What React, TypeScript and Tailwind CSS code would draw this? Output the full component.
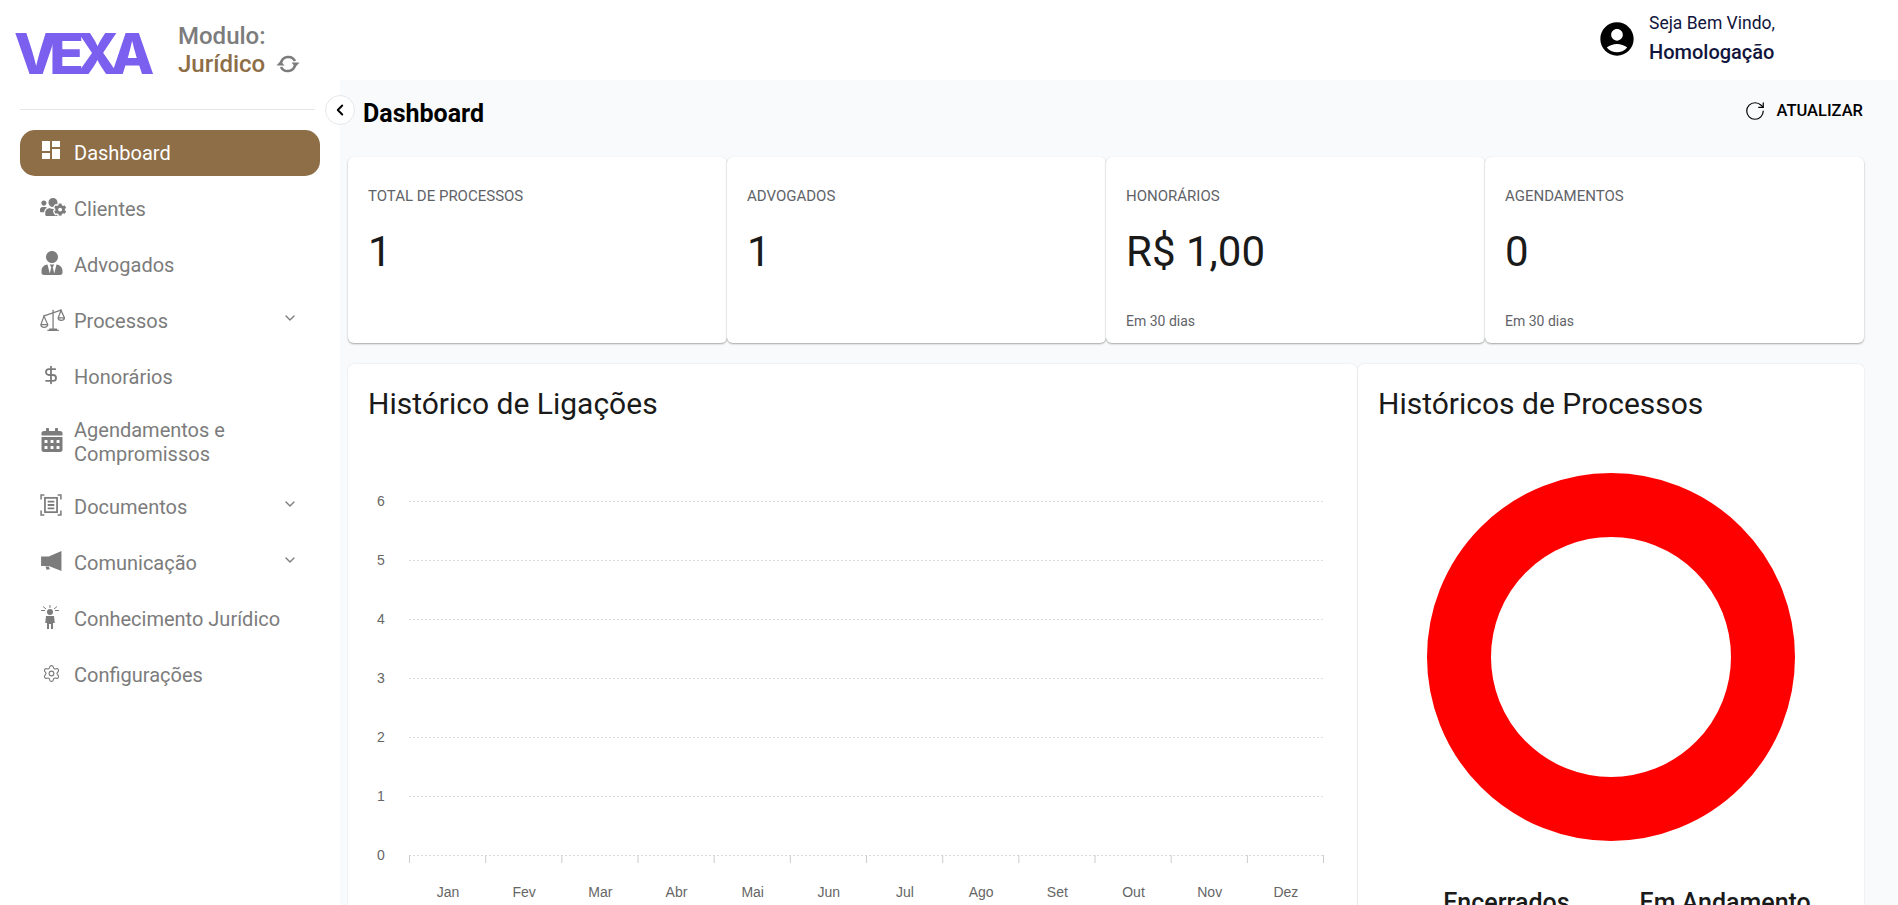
import { ReactNode } from "react";
import { ChevronDown, ChevronLeft, DollarSign, RotateCw, Settings } from "lucide-react";
import { FaCalendarAlt, FaUserTie, FaUsersCog } from "react-icons/fa";
import { MdAccountCircle, MdDashboard } from "react-icons/md";

const months = ["Jan", "Fev", "Mar", "Abr", "Mai", "Jun", "Jul", "Ago", "Set", "Out", "Nov", "Dez"];

function SyncIcon() {
  return (
    <svg viewBox="0 0 24 20" className="h-[20px] w-[24px]" fill="none" stroke="currentColor" strokeWidth="2.6">
      <path d="M5 9a7.5 7.5 0 0 1 14-2" />
      <path d="M19 11a7.5 7.5 0 0 1-14 2" />
      <path d="M15.5 8.5h8L19.5 13zM.5 11.5h8L4.5 7z" fill="currentColor" stroke="none" />
    </svg>
  );
}

function ScaleIcon() {
  return (
    <svg viewBox="0 0 22 22" className="h-[25px] w-[25px]" fill="none" stroke="currentColor" strokeWidth="1.1">
      <path d="M11.5 2.5v16.5M6.5 20.5h10M8 19.5h7" />
      <path d="M3 8 19 2.5" />
      <path d="M3.5 8 .8 15.5h6zM.8 15.5a3 2.4 0 0 0 6 0" />
      <path d="M18.5 3 16 9.5h5.5zM16 9.5a2.7 2.2 0 0 0 5.5 0" />
    </svg>
  );
}

function DocIcon() {
  return (
    <svg viewBox="0 0 20 20" className="h-[22px] w-[22px]" fill="none" stroke="currentColor" strokeWidth="1.4">
      <path d="M1 5V1h3M16 1h3v4M1 15v4h3M16 19h3v-4" />
      <rect x="4.5" y="3.5" width="11" height="13" strokeWidth="1.6" />
      <path d="M7 7h6M7 10h6M7 13h6" strokeWidth="1.6" />
    </svg>
  );
}

function HornIcon() {
  return (
    <svg viewBox="0 0 20 20" className="h-[22px] w-[22px]" fill="currentColor">
      <path d="M19.5 1v18L8 14.5H1V6h7z" />
      <path d="M5 15h3l1 2.5-3 .5z" />
    </svg>
  );
}

function KnowledgeIcon() {
  return (
    <svg viewBox="0 0 20 24" className="h-[24px] w-[20px]" fill="currentColor">
      <circle cx="10" cy="7" r="3" />
      <path d="M6 11h8l.8 7H13v6h-2v-5H9v5H7v-6H5.2z" />
      <path d="M10 0v3M3 1.5 6 4M17 1.5 14 4M1 5.5h4M15 5.5h4" stroke="currentColor" strokeWidth="1" />
    </svg>
  );
}

const menu: { label: ReactNode; icon: ReactNode; arrow?: boolean }[] = [
  { label: "Clientes", icon: <FaUsersCog size={26} /> },
  { label: "Advogados", icon: <FaUserTie size={24} /> },
  { label: "Processos", icon: <ScaleIcon />, arrow: true },
  { label: "Honorários", icon: <DollarSign size={20} strokeWidth={2.2} className="ml-[1px]" /> },
  {
    label: (
      <>
        Agendamentos e<br />
        Compromissos
      </>
    ),
    icon: <FaCalendarAlt size={24} />,
  },
  { label: "Documentos", icon: <DocIcon />, arrow: true },
  { label: "Comunicação", icon: <HornIcon />, arrow: true },
  { label: "Conhecimento Jurídico", icon: <KnowledgeIcon /> },
  { label: "Configurações", icon: <Settings size={19} strokeWidth={1.4} className="ml-[2px]" /> },
];

const stats = [
  { title: "Total de Processos", value: "1" },
  { title: "Advogados", value: "1" },
  { title: "Honorários", value: "R$ 1,00", note: "Em 30 dias" },
  { title: "Agendamentos", value: "0", note: "Em 30 dias" },
];

function LineChart() {
  return (
    <svg width="1009" height="480" viewBox="0 0 1009 480" className="block" fontFamily="'Liberation Sans', sans-serif" fontSize="14" fill="#666">
      {[0, 1, 2, 3, 4, 5, 6].map((n) => {
        const y = 426 - n * 59;
        return (
          <g key={n}>
            <line x1="61" x2="975" y1={y + 0.5} y2={y + 0.5} stroke="#dcdcdc" strokeDasharray="2 2" />
            <text x="33" y={y + 5} textAnchor="middle">
              {n}
            </text>
          </g>
        );
      })}
      {months.map((m, i) => (
        <text key={m} x={62 + 76.17 * i + 38} y={468} textAnchor="middle">
          {m}
        </text>
      ))}
      {[...months, ""].map((_, i) => (
        <line key={i} x1={61.5 + 76.17 * i} x2={61.5 + 76.17 * i} y1="426" y2="434" stroke="#ccc" />
      ))}
    </svg>
  );
}

export default function App() {
  return (
    <div className="flex h-screen overflow-hidden bg-white font-['Roboto',sans-serif]">
      {/* Sidebar */}
      <aside className="w-[340px] shrink-0 bg-white px-5">
        <div className="-ml-[6px] flex h-[109px] items-start">
          <div className="mt-[20px] w-[164px] font-['Inter',sans-serif] text-[57px] leading-[68px] font-extrabold tracking-[-8.5px] text-[#7b5fef]">
            VEXA
          </div>
          <div className="mt-[22px] text-[24px] leading-[28px] font-medium">
            <div className="text-[#7c7c7c]">Modulo:</div>
            <div className="flex items-center gap-[11px] text-[#8d6e47]">
              Jurídico
              <span className="text-[#7c7c7c]">
                <SyncIcon />
              </span>
            </div>
          </div>
        </div>
        <div className="mr-[5px] border-b border-[#e5e7eb]" />

        <nav className="mt-[20px] text-[20px] leading-6 text-[#7c7c7c]">
          <div className="flex h-[46px] w-[300px] items-center rounded-[15px] bg-[#8d6e47] pl-[21px] text-white">
            <span className="flex w-[33px] -translate-y-[3px]">
              <MdDashboard size={24} className="-ml-[2px]" />
            </span>
            Dashboard
          </div>
          <div className="mt-[5px] flex flex-col">
            {menu.map((item, i) => (
              <div key={i} className={`flex w-[300px] items-center pl-5 ${i === 4 ? "h-[74px]" : "h-[56px]"}`}>
                <span className="flex w-[34px] -translate-y-[2px] justify-start">{item.icon}</span>
                <span className="flex-1">{item.label}</span>
                {item.arrow && <ChevronDown size={16} strokeWidth={2} className="mr-[22px] -translate-y-[3px]" />}
              </div>
            ))}
          </div>
        </nav>
      </aside>

      {/* Main */}
      <div className="relative flex min-w-0 flex-1 flex-col">
        <header className="flex h-[80px] shrink-0 items-center justify-end bg-white pr-[121px]">
          <MdAccountCircle size={40} className="mr-[12px] -translate-y-[1px] text-black" />
          <div className="w-[128px] -translate-y-[3px] text-[#11153d]">
            <div className="text-[17.5px] leading-6">Seja Bem Vindo,</div>
            <div className="mt-[5px] text-[20px] leading-6 font-medium">Homologação</div>
          </div>
        </header>

        <button className="absolute left-[-15px] top-[95px] z-10 flex h-[30px] w-[30px] items-center justify-center rounded-full border border-[#e5e7eb] bg-white text-black">
          <ChevronLeft size={18} strokeWidth={2.5} />
        </button>

        <main className="flex-1 bg-[#f9fafb] pl-2 pr-[34px]">
          <div className="flex h-[77px] items-start justify-between pl-[15px]">
            <h1 className="mt-[18px] text-[25px] leading-8 font-bold text-black">Dashboard</h1>
            <button className="mt-[19px] mr-[1px] flex items-center gap-[10px] text-[16.5px] leading-6 font-medium text-black">
              <RotateCw size={22} strokeWidth={1.3} />
              ATUALIZAR
            </button>
          </div>

          <div className="grid grid-cols-4">
            {stats.map((s) => (
              <div key={s.title} className="relative h-[186px] rounded-[6px] bg-white px-5 pt-[29px] shadow-[0_1px_2px_rgba(0,0,0,0.35)]">
                <div className="text-[15px] leading-5 text-[#5f6368] uppercase">{s.title}</div>
                <div className="mt-[21px] text-[42px] leading-[50px] text-[#1a1a1a]">{s.value}</div>
                {s.note && <div className="absolute bottom-[12px] text-[14px] leading-5 text-[#5f6368]">{s.note}</div>}
              </div>
            ))}
          </div>

          <div className="mt-[21px] flex gap-px">
            <section className="w-[1009px] shrink-0 rounded-[6px] bg-white shadow-[0_0_2px_rgba(0,0,0,0.12)]">
              <h2 className="px-5 pt-[22px] text-[30px] leading-9 text-[#1a1a1a]">Histórico de Ligações</h2>
              <div className="mt-[7px]">
                <LineChart />
              </div>
            </section>
            <section className="flex-1 rounded-[6px] bg-white shadow-[0_0_2px_rgba(0,0,0,0.12)]">
              <h2 className="px-5 pt-[22px] text-[30px] leading-9 text-[#1a1a1a]">Históricos de Processos</h2>
              <div className="mt-[51px] flex justify-center">
                <svg width="368" height="368" viewBox="0 0 368 368" className="block">
                  <circle cx="184" cy="184" r="152" fill="none" stroke="#ff0000" strokeWidth="64" />
                </svg>
              </div>
              <div className="mt-[48px] flex justify-center gap-[70px] pl-[32px] text-[25px] leading-7 font-medium text-[#1a1a1a]">
                <span>Encerrados</span>
                <span>Em Andamento</span>
              </div>
            </section>
          </div>
        </main>
      </div>
    </div>
  );
}
